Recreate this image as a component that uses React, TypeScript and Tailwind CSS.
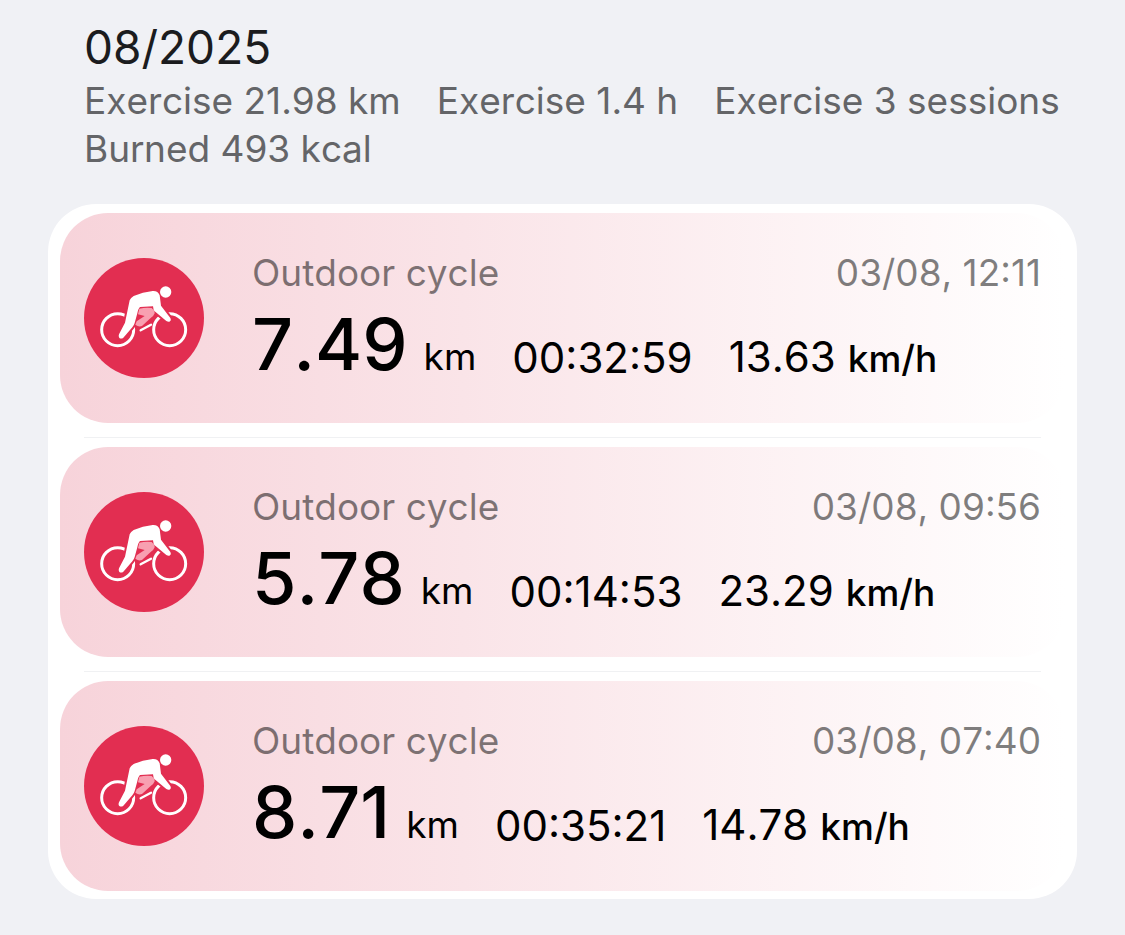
import React from 'react';

interface Workout {
  id: number;
  name: string;
  date: string;
  distance: string;
  duration: string;
  speed: string;
}

const summary = ['Exercise 21.98 km', 'Exercise 1.4 h', 'Exercise 3 sessions', 'Burned 493 kcal'];

const workouts: Workout[] = [
  { id: 1, name: 'Outdoor cycle', date: '03/08, 12:11', distance: '7.49', duration: '00:32:59', speed: '13.63' },
  { id: 2, name: 'Outdoor cycle', date: '03/08, 09:56', distance: '5.78', duration: '00:14:53', speed: '23.29' },
  { id: 3, name: 'Outdoor cycle', date: '03/08, 07:40', distance: '8.71', duration: '00:35:21', speed: '14.78' },
];

const CyclingIcon: React.FC = () => (
  <svg viewBox="0 0 360 360" className="w-[120px] h-[120px] shrink-0" aria-hidden="true">
    <circle cx="180" cy="180" r="180" fill="#e22e51" />
    {/* Wheels */}
    <g fill="none" stroke="#fff" strokeWidth="9">
      <circle cx="101" cy="215" r="48" />
      <circle cx="257" cy="215" r="48" />
    </g>
    {/* Red outline keeps the limbs clear of the wheels */}
    <g stroke="#e22e51" strokeWidth="12" strokeLinejoin="round" fill="#e22e51">
      <path d="M164 148 L203 148 Q211 158 211 164 Q210 171 200 178 L170 206 L154 199 L158 192 L180 172 L162 166 Z" />
      <path d="M137 127 Q140 119 149 114 Q176 102 206 99 Q222 98 227 112 L231 143 L259 180 Q263 188 256 191 Q252 192 247 189 L212 160 Q208 157 207 145 L168 147 Q163 151 160 166 L152 195 Q150 202 145 208 L118 239 Q112 244 106 240 Q102 236 105 229 L123 194 Z" />
    </g>
    <path d="M166 152 Q184 148 203 150 Q213 158 212 166 Q210 173 200 180 L174 204 Q164 208 154 200 L158 190 L182 174 L162 169 Z" fill="#f8a0b1" />
    <path d="M170 217 L201 200" stroke="#fff" strokeWidth="7" strokeLinecap="round" />
    <path
      d="M137 127 Q140 119 149 114 Q176 102 206 99 Q222 98 227 112 L231 143 L259 180 Q263 188 256 191 Q252 192 247 189 L212 160 Q208 157 207 145 L168 147 Q163 151 160 166 L152 195 Q150 202 145 208 L118 239 Q112 244 106 240 Q102 236 105 229 L123 194 Z"
      fill="#fff"
    />
    <circle cx="245" cy="102" r="17" fill="#fff" />
  </svg>
);

const WorkoutRow: React.FC<{ workout: Workout }> = ({ workout }) => (
  <article className="flex items-center gap-12 h-[210px] px-6 rounded-[48px] bg-linear-to-r from-[#f7d3da] via-[#fae4e8] via-40% to-white">
    <CyclingIcon />

    <div className="flex-1 min-w-0 pb-[5px]">
      <div className="flex items-center justify-between text-[37px] leading-[48px] text-black/50">
        <h2>{workout.name}</h2>
        <time>{workout.date}</time>
      </div>

      {/* Stats */}
      <div className="mt-2 flex items-end gap-9 whitespace-nowrap text-black">
        <p className="flex items-baseline gap-4 text-[72px] leading-[78px]">
          <span className="font-medium">{workout.distance}</span>
          <span className="text-[37px] leading-[48px]">km</span>
        </p>
        <p className="text-[42px] leading-[50px]">{workout.duration}</p>
        <p className="flex items-baseline gap-3 text-[42px] leading-[50px]">
          <span>{workout.speed}</span>
          <span className="text-[37px] leading-[48px] font-medium">km/h</span>
        </p>
      </div>
    </div>
  </article>
);

const App: React.FC = () => {
  return (
    <main className="min-h-screen bg-[#f0f1f5] px-12 pt-[18px] pb-9 font-['Inter','Liberation_Sans',sans-serif] [font-kerning:none]">
      {/* Month summary */}
      <header className="pl-9">
        <h1 className="text-[46px] leading-[58px] text-[#1b1c1e]">08/2025</h1>
        <div className="mt-px flex flex-wrap gap-x-9 text-[37px] leading-[48px] text-[#646568]">
          {summary.map((item) => (
            <span key={item}>{item}</span>
          ))}
        </div>
      </header>

      {/* Workout list */}
      <section className="mt-[31px] bg-white rounded-[48px] px-3 pt-[9px] pb-2">
        {workouts.map((workout, index) => (
          <React.Fragment key={workout.id}>
            {index > 0 && <hr className="mx-6 mt-[14px] mb-[9px] border-t border-[#f0f1f3]" />}
            <WorkoutRow workout={workout} />
          </React.Fragment>
        ))}
      </section>
    </main>
  );
};

export default App;
